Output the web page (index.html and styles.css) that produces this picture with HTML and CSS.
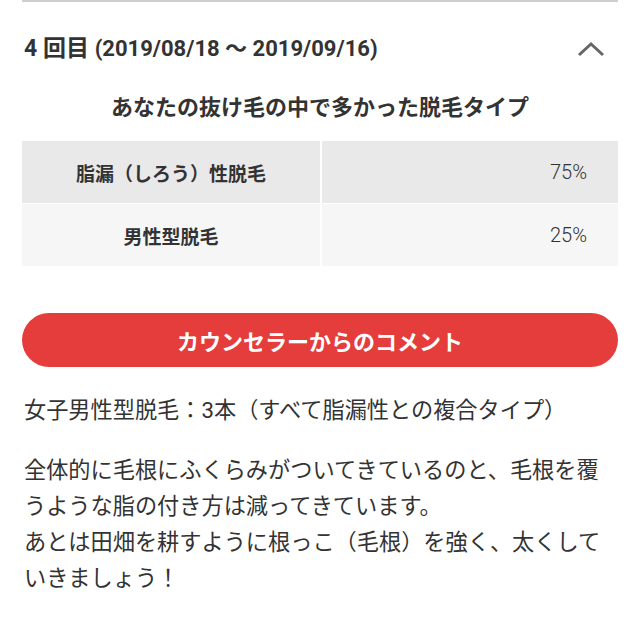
FILE: index.html
```html
<!DOCTYPE html>
<html lang="ja">
<head>
<meta charset="utf-8">
<link rel="stylesheet" href="styles.css">
</head>
<body>
<div class="topline"></div>
<div class="header">
  <div class="title"><span class="num">4 回目</span> <span class="date">(2019/08/18 ～ 2019/09/16)</span></div>
  <svg class="chevron" width="30" height="16" viewBox="0 0 30 16"><polyline points="3,14 15,3 27,14" fill="none" stroke="#666" stroke-width="3"/></svg>
</div>
<div class="subtitle">あなたの抜け毛の中で多かった脱毛タイプ</div>
<div class="table">
  <div class="cell label r1">脂漏（しろう）性脱毛</div>
  <div class="cell value r1">75%</div>
  <div class="cell label r2">男性型脱毛</div>
  <div class="cell value r2">25%</div>
</div>
<div class="button">カウンセラーからのコメント</div>
<p class="text">女子男性型脱毛：3本（すべて脂漏性との複合タイプ）</p>
<p class="text para">全体的に毛根にふくらみがついてきているのと、毛根を覆うような脂の付き方は減ってきています。<br>あとは田畑を耕すように根っこ（毛根）を強く、太くしていきましょう！</p>
</body>
</html>
```
FILE: styles.css
```css
html, body {
  margin: 0;
  padding: 0;
  background: #fff;
}
body {
  width: 640px;
  font-family: Roboto, "Noto Sans CJK JP", sans-serif;
  color: #333;
}
.topline {
  margin: 0 22px;
  height: 2px;
  background: #cfcfcf;
}
.header {
  margin: 30px 24px 0 24px;
  height: 34px;
  display: flex;
  align-items: center;
  justify-content: space-between;
}
.title {
  font-weight: 700;
  font-size: 23px;
  line-height: 34px;
  white-space: nowrap;
}
.title .date {
  font-size: 22px;
}
.chevron {
  margin-right: 10px;
}
.subtitle {
  margin-top: 26px;
  text-align: center;
  font-weight: 700;
  font-size: 22px;
  line-height: 32px;
}
.table {
  margin: 17px 22px 0 22px;
  display: grid;
  grid-template-columns: 298px 1fr;
  column-gap: 2px;
  row-gap: 1px;
}
.cell {
  height: 62px;
  display: flex;
  align-items: center;
}
.r1 { background: #e9e9e9; }
.r2 { background: #f6f6f6; }
.label {
  justify-content: center;
  font-weight: 700;
  font-size: 19px;
}
.value {
  justify-content: flex-end;
  padding-right: 31px;
  font-size: 20px;
  font-weight: 300;
}
.button {
  margin: 47px 22px 0 22px;
  height: 54px;
  border-radius: 27px;
  background: #e53c3c;
  color: #fff;
  font-weight: 700;
  font-size: 22px;
  display: flex;
  align-items: center;
  justify-content: center;
}
.text {
  margin: 25px 20px 0 24px;
  font-size: 22.2px;
  line-height: 36px;
}
.para {
  margin-top: 24px;
}
```
